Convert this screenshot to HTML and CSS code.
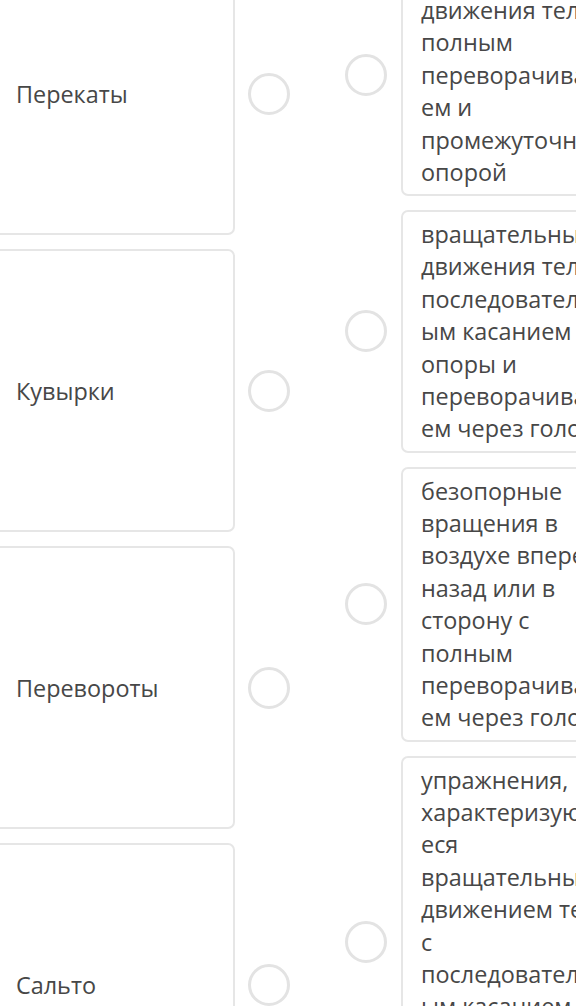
FILE: index.html
```html
<!DOCTYPE html>
<html lang="ru">
<head>
<meta charset="utf-8">
<link rel="stylesheet" href="styles.css">
</head>
<body>
<div class="board">
  <div class="col col-left">
    <div class="row row-left">
      <div class="card card-left">Перекаты</div>
      <span class="radio"></span>
    </div>
    <div class="row row-left">
      <div class="card card-left">Кувырки</div>
      <span class="radio"></span>
    </div>
    <div class="row row-left">
      <div class="card card-left">Перевороты</div>
      <span class="radio"></span>
    </div>
    <div class="row row-left">
      <div class="card card-left">Сальто</div>
      <span class="radio"></span>
    </div>
  </div>
  <div class="col col-right">
    <div class="row row-right">
      <span class="radio"></span>
      <div class="card card-right"><p class="answer">вращательные движения тела с полным переворачиванием и промежуточной опорой</p></div>
    </div>
    <div class="row row-right">
      <span class="radio"></span>
      <div class="card card-right"><p class="answer">вращательные движения тела с последовательным касанием опоры и переворачиванием через голову</p></div>
    </div>
    <div class="row row-right">
      <span class="radio"></span>
      <div class="card card-right"><p class="answer">безопорные вращения в воздухе вперед, назад или в сторону с полным переворачиванием через голову</p></div>
    </div>
    <div class="row row-right">
      <span class="radio"></span>
      <div class="card card-right"><p class="answer">упражнения, характеризующиеся вращательным движением тела с последовательным касанием опоры и переворачиванием через голову</p></div>
    </div>
  </div>
</div>
</body>
</html>
```

FILE: styles.css
```css
html, body {
  margin: 0;
  padding: 0;
  background: #ffffff;
  overflow: hidden;
}
body {
  font-family: "Open Sans", "Noto Sans", sans-serif;
  font-size: 23.4px;
  color: #474747;
  width: 576px;
  height: 1006px;
}
.board {
  display: flex;
  align-items: flex-start;
  gap: 55px;
  margin: -48px 0 0 -10px;
}
.col {
  display: flex;
  flex-direction: column;
  flex: none;
}
.col-left {
  gap: 14px;
}
.col-right {
  gap: 13.7px;
  margin-top: 1.5px;
}
.row {
  display: flex;
  align-items: center;
}
.row-left {
  gap: 13px;
}
.row-right {
  gap: 14px;
}
.card {
  box-sizing: border-box;
  border: 2px solid #e6e6e6;
  border-radius: 7px;
  background: #ffffff;
  flex: none;
}
.card-left {
  width: 245px;
  height: 283px;
  display: flex;
  align-items: center;
  padding-left: 24px;
  line-height: 32px;
}
.card-right {
  padding: 6px 17px 6px 18px;
}
.answer {
  margin: 0;
  width: 200px;
  line-height: 32.4px;
  overflow-wrap: break-word;
}
.radio {
  box-sizing: border-box;
  flex: none;
  width: 42px;
  height: 42px;
  border: 3px solid #e3e3e3;
  border-radius: 50%;
}
```
